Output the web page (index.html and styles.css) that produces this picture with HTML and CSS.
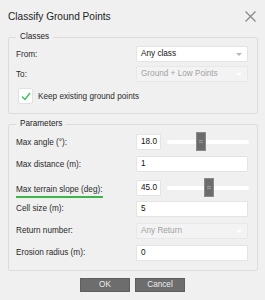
FILE: index.html
```html
<!DOCTYPE html>
<html lang="en">
<head>
  <meta charset="UTF-8" />
  <title>Classify Ground Points</title>
  <link rel="stylesheet" href="styles.css">
</head>
<body>
  <div class="dialog">
    <div class="titlebar">
      <span class="title">Classify Ground Points</span>
      <svg class="close" width="11" height="11" viewBox="0 0 11 11">
        <path d="M0.5 0.5 L10.5 10.5 M10.5 0.5 L0.5 10.5" stroke="#8a8a8a" stroke-width="1.3" fill="none" />
      </svg>
    </div>

    <fieldset class="group classes">
      <legend>Classes</legend>
      <div class="row">
        <label>From:</label>
        <div class="combo">Any class<span class="arrow"></span></div>
      </div>
      <div class="row">
        <label>To:</label>
        <div class="combo disabled">Ground + Low Points<span class="arrow"></span></div>
      </div>
      <div class="check-row">
        <span class="checkbox">
          <svg width="10" height="9" viewBox="0 0 10 9">
            <path d="M1 4.5 L4 7.5 L9 1" stroke="#3cc35a" stroke-width="1.4" fill="none" />
          </svg>
        </span>
        <span>Keep existing ground points</span>
      </div>
    </fieldset>

    <fieldset class="group params">
      <legend>Parameters</legend>
      <div class="row">
        <label>Max angle (°):</label>
        <div class="slider-field">
          <div class="input small">18.0</div>
          <div class="slider"><span class="track"></span><span class="handle" style="left: 29px"></span></div>
        </div>
      </div>
      <div class="row">
        <label>Max distance (m):</label>
        <div class="input">1</div>
      </div>
      <div class="row">
        <label class="marked">Max terrain slope (deg):</label>
        <div class="slider-field">
          <div class="input small">45.0</div>
          <div class="slider"><span class="track"></span><span class="handle" style="left: 37px"></span></div>
        </div>
      </div>
      <div class="row">
        <label>Cell size (m):</label>
        <div class="input">5</div>
      </div>
      <div class="row">
        <label>Return number:</label>
        <div class="combo disabled">Any Return<span class="arrow"></span></div>
      </div>
      <div class="row">
        <label>Erosion radius (m):</label>
        <div class="input">0</div>
      </div>
    </fieldset>

    <div class="buttons">
      <button>OK</button>
      <button>Cancel</button>
    </div>
  </div>
</body>
</html>
```

FILE: styles.css
```css
html, body {
  margin: 0;
  background-color: #f0f0f0;
}

body {
  font-family: "Liberation Sans", Arial, sans-serif;
  font-size: 8.2px;
  color: #2a2a2a;
}

.dialog {
  width: 265px;
  height: 300px;
  box-sizing: border-box;
}

.titlebar {
  height: 32px;
  display: flex;
  align-items: center;
  justify-content: space-between;
  padding: 0 9px 0 8px;
  box-sizing: border-box;
}

.title {
  font-size: 10.1px;
  color: #222;
}

.close {
  display: block;
}

.group {
  margin: 0 7px 0 8px;
  border: 1px solid #dcdcdc;
  border-radius: 2px;
  padding: 0 9px 7px 7px;
  min-width: 0;
}

.group legend {
  padding: 0 4px;
  margin-left: 0;
  line-height: 10px;
  color: #222;
}

.classes {
  padding-top: 4px;
  padding-bottom: 9px;
  display: flex;
  flex-direction: column;
  gap: 4px;
}

.params {
  margin-top: 5px;
  padding-top: 5px;
  padding-bottom: 9px;
}

.row {
  display: grid;
  grid-template-columns: 120px 1fr;
  align-items: center;
  height: 16px;
}

.params .row + .row {
  margin-top: 6.2px;
}

.row label {
  white-space: nowrap;
}

.row label.marked {
  border-bottom: 2px solid #3db54a;
  width: fit-content;
  padding-right: 1px;
  line-height: 12px;
  margin-top: 6px;
}

.combo,
.input {
  position: relative;
  height: 16px;
  box-sizing: border-box;
  border: 1px solid #e4e4e4;
  border-radius: 1px;
  background-color: #fff;
  padding-left: 4px;
  line-height: 14px;
  color: #111;
}

.combo.disabled {
  background-color: #f3f3f3;
  color: #a2a2a2;
  border-color: #e8e8e8;
}

.arrow {
  position: absolute;
  right: 5px;
  top: 6px;
  width: 0;
  height: 0;
  border-left: 3px solid transparent;
  border-right: 3px solid transparent;
  border-top: 3px solid #b8b8b8;
}

.combo.disabled .arrow {
  border-top-color: #fff;
}

.check-row {
  display: flex;
  align-items: center;
  gap: 5px;
  margin-top: 2px;
  padding-left: 2px;
}

.checkbox {
  width: 15px;
  height: 16px;
  box-sizing: border-box;
  border: 1px solid #e2e2e2;
  border-radius: 2px;
  background-color: #fff;
  display: flex;
  align-items: center;
  justify-content: center;
}

.checkbox svg {
  display: block;
}

.slider-field {
  display: flex;
  align-items: center;
  gap: 6px;
}

.input.small {
  width: 25px;
  flex: none;
}

.slider {
  position: relative;
  flex: 1;
  height: 16px;
  margin-right: -1px;
}

.track {
  position: absolute;
  left: 0;
  right: 0;
  top: 6px;
  height: 4px;
  border-radius: 2px;
  background-color: #fff;
}

.handle {
  position: absolute;
  top: -2px;
  width: 10px;
  height: 19px;
  box-sizing: border-box;
  background-color: #6c6c6c;
  border: 1px solid #8a8a8a;
}

.handle::after {
  content: "";
  position: absolute;
  left: 2px;
  right: 2px;
  top: 7px;
  height: 1px;
  border-top: 1px solid #9a9a9a;
  border-bottom: 1px solid #9a9a9a;
}

.buttons {
  display: flex;
  justify-content: center;
  gap: 5px;
  margin-top: 7px;
}

.buttons button {
  width: 50px;
  height: 14px;
  padding: 0;
  border: 1px solid #5e5e5e;
  background-color: #6d6d6d;
  color: #ececec;
  font-family: "Liberation Sans", Arial, sans-serif;
  font-size: 8.2px;
  line-height: 12px;
}
```
